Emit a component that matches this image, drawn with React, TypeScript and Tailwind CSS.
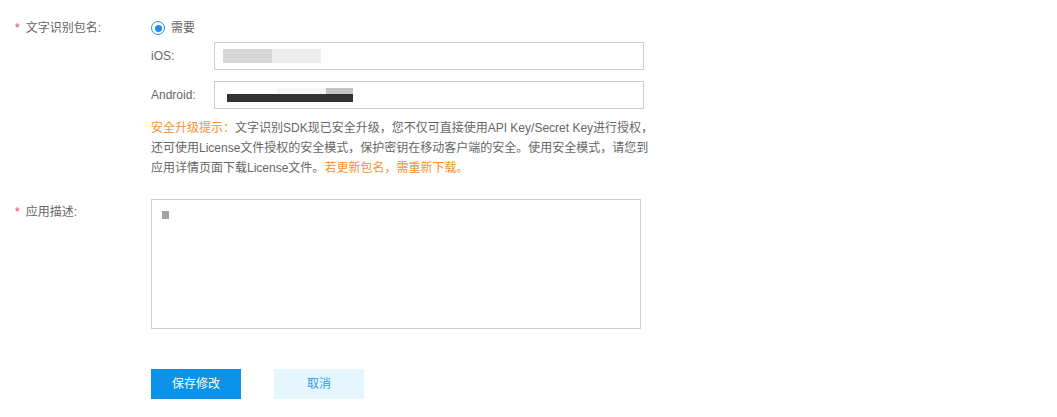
import React from "react";

const font = { fontFamily: '"Liberation Sans", "Noto Sans CJK SC", sans-serif' };

const Label = ({ text }: { text: string }) => (
  <div className="flex h-[20px] w-[151px] shrink-0 items-center pl-[15px] text-[12px] leading-[20px] text-[#666]">
    <span className="mr-[6px] text-[#f2414c]">*</span>
    <span>{text}:</span>
  </div>
);

const App: React.FC = () => {
  return (
    <div className="h-[417px] w-[1057px] bg-white pt-[18px]" style={font}>
      {/* 包名 */}
      <div className="flex items-start">
        <Label text="文字识别包名" />
        <div className="flex flex-col">
          <label className="flex h-[20px] items-center text-[12px] text-[#666]">
            <span className="flex h-[14px] w-[14px] items-center justify-center rounded-full border-[1.5px] border-[#1f8ceb]">
              <span className="h-[7px] w-[7px] rounded-full bg-[#1f8ceb]"></span>
            </span>
            <span className="ml-[6px]">需要</span>
          </label>
          <div className="mt-[4px] flex items-center">
            <div className="w-[63px] text-[12px] text-[#666]">iOS:</div>
            <div className="flex h-[28px] w-[430px] items-center border border-[#ccc] pl-[8px]">
              <div className="h-[14px] w-[49px] bg-[#d6d6d6]"></div>
              <div className="h-[14px] w-[49px] bg-[#ececec]"></div>
            </div>
          </div>
          <div className="mt-[11px] flex items-center">
            <div className="w-[63px] text-[12px] text-[#666]">Android:</div>
            <div className="flex h-[28px] w-[430px] flex-col justify-center border border-[#ccc] pl-[12px]">
              <div className="flex h-[6px] w-[126px] justify-end">
                <div className="h-[6px] w-[49px] bg-[#f6f6f6]"></div>
                <div className="h-[6px] w-[27px] bg-[#c4c4c4]"></div>
              </div>
              <div className="h-[8px] w-[126px] bg-[#333]"></div>
            </div>
          </div>
          <p className="mt-[9px] whitespace-nowrap text-[12px] leading-[20px] text-[#666]">
            <span className="text-[#f5922f]">安全升级提示：</span>
            文字识别SDK现已安全升级，您不仅可直接使用API Key/Secret Key进行授权，
            <br />
            还可使用License文件授权的安全模式，保护密钥在移动客户端的安全。使用安全模式，请您到
            <br />
            应用详情页面下载License文件。
            <span className="text-[#f5922f]">若更新包名，需重新下载。</span>
          </p>
        </div>
      </div>

      {/* 应用描述 */}
      <div className="mt-[21px] flex items-start">
        <div className="pt-[3px]">
          <Label text="应用描述" />
        </div>
        <div className="h-[130px] w-[490px] border border-[#ccc] pl-[10px] pt-[11px]">
          <div className="h-[8px] w-[7px] bg-[#a3a3a3]"></div>
        </div>
      </div>

      {/* 按钮 */}
      <div className="mt-[40px] flex pl-[151px]">
        <button className="h-[30px] w-[90px] bg-[#0a93e8] text-[12px] text-white">
          保存修改
        </button>
        <button className="ml-[33px] h-[30px] w-[90px] bg-[#e5f6fe] text-[12px] text-[#2a9de6]">
          取消
        </button>
      </div>
    </div>
  );
};

export default App;
